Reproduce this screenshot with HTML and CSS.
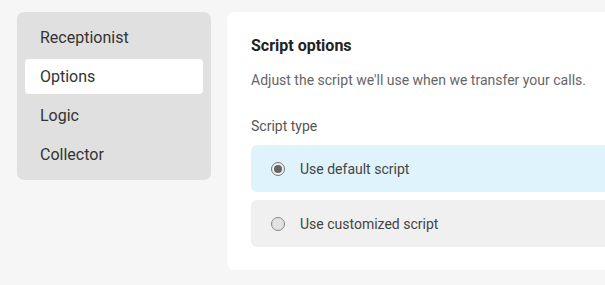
FILE: index.html
```html
<!DOCTYPE html>
<html lang="en">

<head>
    <meta charset="UTF-8">
    <meta name="viewport" content="width=device-width, initial-scale=1.0">
    <title>Script options</title>
    <link rel="stylesheet" href="styles.css">
</head>

<body>
    <div class="layout">

        <nav class="menu">
            <a class="menu_item">Receptionist</a>
            <a class="menu_item valgt">Options</a>
            <a class="menu_item">Logic</a>
            <a class="menu_item">Collector</a>
        </nav>

        <section class="card">
            <h2>Script options</h2>
            <p class="desc">Adjust the script we'll use when we transfer your calls.</p>

            <p class="label">Script type</p>

            <label class="option checked">
                <span class="radio"></span>
                Use default script
            </label>
            <label class="option">
                <span class="radio"></span>
                Use customized script
            </label>
        </section>

    </div>
</body>

</html>
```

FILE: styles.css
```css
* {
    box-sizing: border-box;
}

body {
    margin: 0;
    background: #f6f6f6;
    font-family: Roboto, 'Liberation Sans', sans-serif;
    color: #333;
    overflow: hidden;
}

.layout {
    display: flex;
    align-items: flex-start;
    gap: 16px;
    padding: 12px 0 0 17px;
}

.menu {
    width: 194px;
    flex-shrink: 0;
    background: #e0e0e0;
    border-radius: 7px;
    padding: 8px;
    display: flex;
    flex-direction: column;
    gap: 4px;
}

.menu_item {
    height: 35px;
    display: flex;
    align-items: center;
    padding-left: 15px;
    font-size: 16px;
    color: #333;
    border-radius: 4px;
}

.menu_item.valgt {
    background: #fff;
}

/* card runs on past the right edge of the window */
.card {
    flex: 1;
    background: #fff;
    border-radius: 8px 0 0 8px;
    padding: 25px 0 23px 24px;
}

h2 {
    margin: 0;
    font-size: 16px;
    font-weight: 700;
    color: #222;
    line-height: 18px;
}

.desc {
    margin: 16px 0 0;
    font-size: 14px;
    color: #666;
    line-height: 18px;
    white-space: nowrap;
}

.label {
    margin: 28px 0 0;
    font-size: 14px;
    color: #555;
    line-height: 18px;
}

.option {
    margin-top: 10px;
    height: 47px;
    display: flex;
    align-items: center;
    gap: 15px;
    padding-left: 20px;
    border-radius: 6px 0 0 6px;
    background: #f0f0f0;
    font-size: 14px;
    color: #444;
}

.option + .option {
    margin-top: 8px;
}

.option.checked {
    background: #dff3fc;
}

.radio {
    width: 14px;
    height: 14px;
    border-radius: 50%;
    border: 1px solid #888;
    background: #e2e2e2;
    position: relative;
}

.checked .radio {
    background: #eee;
    border-color: #777;
}

.checked .radio::after {
    content: "";
    position: absolute;
    top: 2px;
    left: 2px;
    width: 8px;
    height: 8px;
    border-radius: 50%;
    background: #666;
}
```
